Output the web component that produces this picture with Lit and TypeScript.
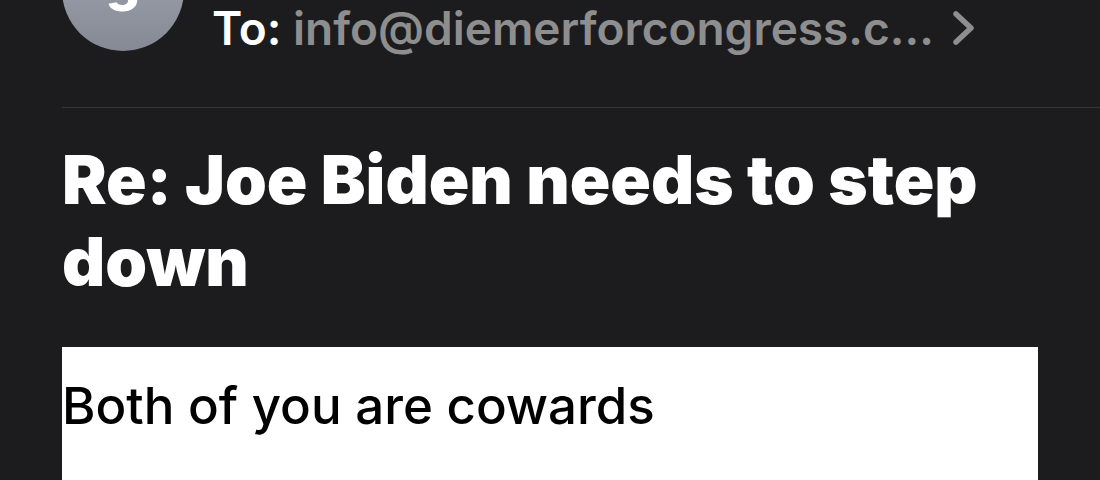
import { LitElement, html, css } from "lit";
import { customElement } from "lit/decorators.js";

@customElement("app-root")
export class AppRoot extends LitElement {
  static styles = css`
    :host {
      display: block;
      height: 100vh;
      overflow: hidden;
      background: #1c1c1e;
      color: #fff;
      font-family: Inter, "Liberation Sans", sans-serif;
    }
    .mail {
      display: flex;
      flex-direction: column;
      height: 100%;
      padding-left: 62px;
    }
    .header {
      display: flex;
      align-items: flex-end;
      gap: 28px;
      flex: none;
      height: 108px;
      box-sizing: border-box;
      padding-bottom: 56px;
      border-bottom: 1px solid #38383a;
    }
    .avatar {
      display: flex;
      align-items: center;
      justify-content: center;
      flex: none;
      width: 122px;
      height: 122px;
      box-sizing: border-box;
      padding-bottom: 20px;
      border-radius: 50%;
      background: linear-gradient(#a5abb9, #858993);
      font-size: 54px;
      font-weight: 800;
    }
    .recipient {
      display: flex;
      align-items: center;
      gap: 18px;
      min-width: 0;
      font-size: 46px;
      line-height: 46px;
      font-weight: 600;
      color: inherit;
      text-decoration: none;
      white-space: nowrap;
    }
    .address {
      color: #8e8e8f;
    }
    .chevron {
      flex: none;
      width: 24px;
      height: 36px;
    }
    .subject {
      margin: 0;
      padding: 31px 62px 44px 0;
      font-size: 67px;
      line-height: 82px;
      font-weight: 900;
    }
    .body {
      flex: 1;
      margin-right: 62px;
      padding-top: 27px;
      background: #fff;
      color: #000;
    }
    .text {
      margin: 0;
      font-size: 51px;
      line-height: 64px;
      font-weight: 500;
    }
  `;

  render() {
    return html`
      <article class="mail">
        <header class="header">
          <div class="avatar">g</div>
          <a class="recipient" href="#recipients">
            <span>To: <span class="address">info@diemerforcongress.c...</span></span>
            <svg class="chevron" viewBox="0 0 24 36" fill="none" stroke="#8e8e8f" stroke-width="5.5" stroke-linecap="round" stroke-linejoin="round" aria-hidden="true">
              <path d="M4 4 19 18 4 32" />
            </svg>
          </a>
        </header>
        <h1 class="subject">Re: Joe Biden needs to step down</h1>
        <section class="body">
          <p class="text">Both of you are cowards</p>
        </section>
      </article>
    `;
  }
}
